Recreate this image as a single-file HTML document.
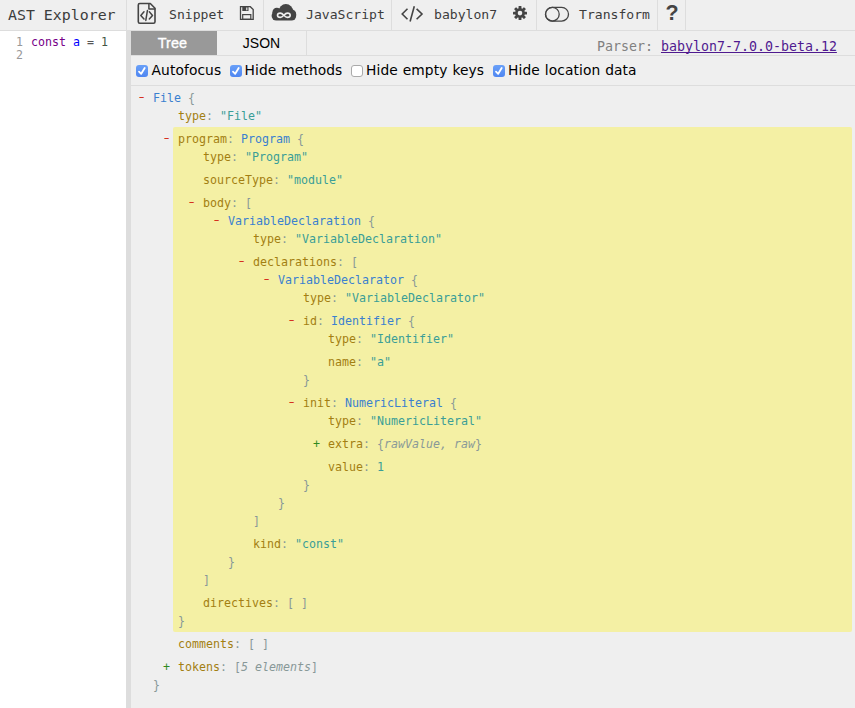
<!DOCTYPE html>
<html>
<head>
<meta charset="utf-8">
<title>AST Explorer</title>
<style>
html,body{margin:0;padding:0;}
body{width:855px;height:708px;overflow:hidden;background:#efefef;position:relative;font-family:"DejaVu Sans Mono","Liberation Mono",monospace;}
#toolbar{position:absolute;left:0;top:0;width:855px;height:30px;background:#efefef;border-bottom:1px solid #ddd;font-size:13.1px;color:#3c3c3c;white-space:nowrap;}
#toolbar .t{position:absolute;top:0;line-height:30px;height:30px;}
#toolbar h1{position:absolute;left:8px;top:0;margin:0;font-weight:normal;font-size:14.9px;line-height:30px;color:#3c3c3c;}
#toolbar .sep{position:absolute;top:0;width:1px;height:30px;background:#ddd;}
#toolbar svg{position:absolute;}
#editor{position:absolute;left:0;top:31px;width:126px;height:677px;background:#fff;font-size:11.63px;line-height:13px;}
#editor .ln{position:absolute;left:0;width:23px;text-align:right;color:#999;}
#editor .code{position:absolute;left:31px;white-space:pre;color:#555;}
#divider{position:absolute;left:126px;top:31px;width:5px;height:677px;background:#ddd;}
#out{position:absolute;left:131px;top:31px;width:724px;height:677px;background:#efefef;}
#tabs{position:absolute;left:0;top:0;width:724px;height:24px;border-bottom:1px solid #ddd;font-family:"Liberation Sans",sans-serif;font-size:14px;}
#tabs .tab{position:absolute;top:0;height:24px;line-height:24px;text-align:center;}
#parser{position:absolute;left:466px;top:4px;line-height:24px;font-size:13.29px;color:#808080;white-space:nowrap;}
#parser a{color:#4f1a8f;text-decoration:underline;text-decoration-skip-ink:none;}
#opts{position:absolute;left:0;top:25px;width:724px;height:29px;border-bottom:1px solid #ddd;font-family:"DejaVu Sans","Liberation Sans",sans-serif;font-size:13.8px;letter-spacing:0.1px;word-spacing:0.4px;color:#000;}
#opts .cb{position:absolute;top:9px;width:12px;height:12px;box-sizing:border-box;border-radius:3px;}
#opts .cb.on{background:linear-gradient(#69a0f8,#4f86f1);}
#opts .cb.off{background:#fff;border:1px solid #aaa;}
#opts .lb{position:absolute;top:0;line-height:29px;white-space:nowrap;}
#tree{position:absolute;left:0;top:1px;width:724px;font-size:11.63px;line-height:18px;white-space:pre;color:#889898;}
#tree .r{position:absolute;height:18px;}
.m{color:#d6301f;transform:scaleX(1.45);transform-origin:50% 50%;margin-top:-1px}.g{color:#2f8a1f}.k{color:#a37f12}.n{color:#3a80cf}.s{color:#3a9e97}.p{color:#889898}.i{font-style:italic}.v{color:#2aa198}
#hl{position:absolute;left:42px;top:96px;width:679px;height:505px;background:#f4f0a4;border-radius:2px;}
</style>
</head>
<body>
<div id="toolbar">
<svg width="855" height="30" viewBox="0 0 855 30" style="left:0;top:0" fill="none" stroke="#444" stroke-linecap="round" stroke-linejoin="round">
<path d="M139.8 3.5H150.3L155 8.2V21.7a1.5 1.5 0 0 1-1.5 1.5H139.8a1.5 1.5 0 0 1-1.5-1.5V5a1.5 1.5 0 0 1 1.5-1.5z" stroke-width="1.6"/>
<path d="M148.9 3.8V9H154.8" stroke-width="1.5"/>
<path d="M144 11.8L140.8 15.4L144 19M147.4 10.6L145.8 20.4M149.3 11.8L152.5 15.4L149.3 19" stroke-width="1.5"/>
<path d="M240.5 6.7H250.3L253.2 9.6V19.3H240.5Z" stroke-width="1.3" stroke-linejoin="miter"/>
<rect x="242.3" y="6.6" width="6.2" height="4.4" fill="#444" stroke="none"/>
<rect x="246" y="7.5" width="1.5" height="2.8" fill="#ccc" stroke="none"/>
<rect x="242.7" y="14.6" width="8.1" height="4.7" stroke-width="1.2" stroke-linejoin="miter"/>
<g fill="#444" stroke="none">
<rect x="271.6" y="11.2" width="24.6" height="9.3" rx="4.65"/>
<circle cx="285.9" cy="11.3" r="7.2"/>
<circle cx="276.8" cy="12.2" r="4.4"/>
<circle cx="291.4" cy="14.2" r="4.8"/>
</g>
<path d="M283.85 15.25C285 14 286 13.1 287.4 13.1C289 13.1 290.2 14 290.2 15.25C290.2 16.5 289 17.4 287.4 17.4C286 17.4 285 16.5 283.85 15.25C282.7 14 281.7 13.1 280.3 13.1C278.7 13.1 277.5 14 277.5 15.25C277.5 16.5 278.7 17.4 280.3 17.4C281.7 17.4 282.7 16.5 283.85 15.25Z" stroke="#efefef" stroke-width="1.6"/>
<path d="M407.5 8.8L402.2 14L407.5 19.3M414.3 6.3L410.1 21.5M416.6 8.8L422 14L416.6 19.3" stroke-width="1.6" stroke-linecap="butt" stroke-linejoin="miter"/>
<g fill="#444" stroke="none" transform="translate(520 13.1)">
<circle r="4.9"/>
<rect x="-1.45" y="-7" width="2.9" height="14" rx="0.5"/>
<rect x="-1.45" y="-7" width="2.9" height="14" rx="0.5" transform="rotate(45)"/>
<rect x="-1.45" y="-7" width="2.9" height="14" rx="0.5" transform="rotate(90)"/>
<rect x="-1.45" y="-7" width="2.9" height="14" rx="0.5" transform="rotate(135)"/>
<circle r="2.3" fill="#efefef"/>
</g>
<rect x="545.5" y="7.35" width="23" height="13.7" rx="6.85" stroke-width="1.3"/>
<circle cx="552.35" cy="14.2" r="6.85" stroke-width="1.3"/>
</svg>
<h1>AST Explorer</h1>
<div class="sep" style="left:126px"></div>
<span class="t" style="left:169px">Snippet</span>
<div class="sep" style="left:263px"></div>
<span class="t" style="left:306px">JavaScript</span>
<div class="sep" style="left:391px"></div>
<span class="t" style="left:434px">babylon7</span>
<div class="sep" style="left:536px"></div>
<span class="t" style="left:579px">Transform</span>
<div class="sep" style="left:657px"></div>
<span class="t" style="left:665.5px;top:-2px;font-weight:bold;font-size:21.5px;color:#444;font-family:'Liberation Sans',sans-serif">?</span>
<div class="sep" style="left:685px"></div>
</div>
<div id="editor">
<div class="ln" style="top:5px">1</div><div class="code" style="top:5px"><span style="color:#708">const</span> <span style="color:#00f">a</span> = <span style="color:#454">1</span></div>
<div class="ln" style="top:18px">2</div>
</div>
<div id="divider"></div>
<div id="out">
<div id="tabs">
<div class="tab" style="left:0;width:86px;background:#999;color:#fff"><span style="position:relative;left:-1.5px;top:-0.3px;font-size:14.4px;letter-spacing:0.1px;-webkit-text-stroke:0.35px #fff">Tree</span></div>
<div class="tab" style="left:86px;width:89px;color:#000;border-right:1px solid #ddd">JSON</div>
</div>
<div id="parser">Parser: <a>babylon7-7.0.0-beta.12</a></div>
<div id="opts">
<div class="cb on" style="left:5px"><svg width="12" height="12" viewBox="0 0 12 12" style="position:absolute;left:0;top:0"><path d="M3 6.6L5.2 8.8L8.7 3" fill="none" stroke="#fff" stroke-width="1.8" stroke-linecap="round" stroke-linejoin="round"/></svg></div><span class="lb" style="left:20.5px">Autofocus</span>
<div class="cb on" style="left:98.5px"><svg width="12" height="12" viewBox="0 0 12 12" style="position:absolute;left:0;top:0"><path d="M3 6.6L5.2 8.8L8.7 3" fill="none" stroke="#fff" stroke-width="1.8" stroke-linecap="round" stroke-linejoin="round"/></svg></div><span class="lb" style="left:113.5px">Hide methods</span>
<div class="cb off" style="left:220px"></div><span class="lb" style="left:235px">Hide empty keys</span>
<div class="cb on" style="left:362px"><svg width="12" height="12" viewBox="0 0 12 12" style="position:absolute;left:0;top:0"><path d="M3 6.6L5.2 8.8L8.7 3" fill="none" stroke="#fff" stroke-width="1.8" stroke-linecap="round" stroke-linejoin="round"/></svg></div><span class="lb" style="left:377px">Hide location data</span>
</div>
<div id="hl"></div>
<div id="tree">
<span class="r m" style="left:7px;top:57px">-</span><span class="r" style="left:22px;top:57px"><span class="n">File</span> <span class="p">{</span></span>
<span class="r" style="left:47px;top:75px"><span class="k">type</span><span class="p">: </span><span class="s">"File"</span></span>
<span class="r m" style="left:32px;top:98px">-</span><span class="r" style="left:47px;top:98px"><span class="k">program</span><span class="p">: </span><span class="n">Program</span> <span class="p">{</span></span>
<span class="r" style="left:72px;top:116px"><span class="k">type</span><span class="p">: </span><span class="s">"Program"</span></span>
<span class="r" style="left:72px;top:139px"><span class="k">sourceType</span><span class="p">: </span><span class="s">"module"</span></span>
<span class="r m" style="left:57px;top:162px">-</span><span class="r" style="left:72px;top:162px"><span class="k">body</span><span class="p">: [</span></span>
<span class="r m" style="left:82px;top:180px">-</span><span class="r" style="left:97px;top:180px"><span class="n">VariableDeclaration</span> <span class="p">{</span></span>
<span class="r" style="left:122px;top:198px"><span class="k">type</span><span class="p">: </span><span class="s">"VariableDeclaration"</span></span>
<span class="r m" style="left:107px;top:221px">-</span><span class="r" style="left:122px;top:221px"><span class="k">declarations</span><span class="p">: [</span></span>
<span class="r m" style="left:132px;top:239px">-</span><span class="r" style="left:147px;top:239px"><span class="n">VariableDeclarator</span> <span class="p">{</span></span>
<span class="r" style="left:172px;top:257px"><span class="k">type</span><span class="p">: </span><span class="s">"VariableDeclarator"</span></span>
<span class="r m" style="left:157px;top:280px">-</span><span class="r" style="left:172px;top:280px"><span class="k">id</span><span class="p">: </span><span class="n">Identifier</span> <span class="p">{</span></span>
<span class="r" style="left:197px;top:298px"><span class="k">type</span><span class="p">: </span><span class="s">"Identifier"</span></span>
<span class="r" style="left:197px;top:321px"><span class="k">name</span><span class="p">: </span><span class="s">"a"</span></span>
<span class="r" style="left:172px;top:339px"><span class="p">}</span></span>
<span class="r m" style="left:157px;top:362px">-</span><span class="r" style="left:172px;top:362px"><span class="k">init</span><span class="p">: </span><span class="n">NumericLiteral</span> <span class="p">{</span></span>
<span class="r" style="left:197px;top:380px"><span class="k">type</span><span class="p">: </span><span class="s">"NumericLiteral"</span></span>
<span class="r g" style="left:182px;top:403px">+</span><span class="r" style="left:197px;top:403px"><span class="k">extra</span><span class="p">: {<span class="i">rawValue, raw</span>}</span></span>
<span class="r" style="left:197px;top:426px"><span class="k">value</span><span class="p">: </span><span class="s">1</span></span>
<span class="r" style="left:172px;top:444px"><span class="p">}</span></span>
<span class="r" style="left:147px;top:462px"><span class="p">}</span></span>
<span class="r" style="left:122px;top:480px"><span class="p">]</span></span>
<span class="r" style="left:122px;top:503px"><span class="k">kind</span><span class="p">: </span><span class="s">"const"</span></span>
<span class="r" style="left:97px;top:521px"><span class="p">}</span></span>
<span class="r" style="left:72px;top:539px"><span class="p">]</span></span>
<span class="r" style="left:72px;top:562px"><span class="k">directives</span><span class="p">: [ ]</span></span>
<span class="r" style="left:47px;top:580px"><span class="p">}</span></span>
<span class="r" style="left:47px;top:603px"><span class="k">comments</span><span class="p">: [ ]</span></span>
<span class="r g" style="left:32px;top:626px">+</span><span class="r" style="left:47px;top:626px"><span class="k">tokens</span><span class="p">: [<span class="i">5 elements</span>]</span></span>
<span class="r" style="left:22px;top:644px"><span class="p">}</span></span>
</div>
</div>
</body>
</html>
